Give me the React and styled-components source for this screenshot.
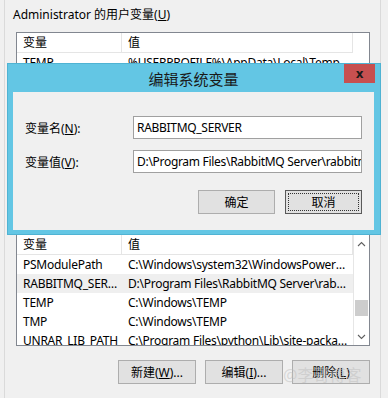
import React from 'react';
import styled, { createGlobalStyle } from 'styled-components';

const GlobalStyle = createGlobalStyle`
  html, body {
    margin: 0;
    padding: 0;
    background: #f0f0f0;
  }
  body {
    font-family: "Noto Sans", "Noto Sans CJK SC", sans-serif;
    font-size: 12px;
    color: #000;
  }
`;

const Window = styled.div`
  position: relative;
  width: 388px;
  height: 398px;
  overflow: hidden;
  background: #f0f0f0;
  box-sizing: border-box;
`;

const Frame = styled.div`
  margin: 0 7px 0 4px;
  height: 100%;
  border-left: 1px solid #dadada;
  border-right: 1px solid #dadada;
  box-sizing: border-box;
  padding: 6px 10px 0 8px;
  display: flex;
  flex-direction: column;
`;

const GroupLabel = styled.div`
  height: 18px;
  line-height: 18px;
  white-space: nowrap;
  margin-bottom: 8px;
`;

const Key = styled.span`
  text-decoration: underline;
`;

const List = styled.div`
  height: ${p => p.height}px;
  margin-left: 3px;
  border: 1px solid #828790;
  background: #fff;
  box-sizing: border-box;
  display: flex;
  overflow: hidden;
`;

const ListBody = styled.div`
  flex: 1;
  min-width: 0;
  display: flex;
  flex-direction: column;
`;

const Row = styled.div`
  display: grid;
  grid-template-columns: 105px minmax(0, 1fr);
  height: 19px;
  flex-shrink: 0;
  line-height: 19px;
  background: ${p => (p.selected ? '#efefef' : 'transparent')};
  white-space: nowrap;
`;

const HeadRow = styled(Row)`
  border-bottom: 1px solid #e5e5e5;
`;

const Cell = styled.div`
  min-width: 0;
  padding-left: 6px;
  padding-right: 4px;
  overflow: hidden;
  text-overflow: ellipsis;
  letter-spacing: -0.25px;
`;

const HeadCell = styled(Cell)`
  border-right: 1px solid #e5e5e5;
  letter-spacing: 0;
`;

const ScrollArea = styled.div`
  width: 15px;
  flex-shrink: 0;
  border-left: 1px solid ${p => (p.bar ? '#e6e6e6' : '#fff')};
  display: flex;
  flex-direction: column;
  background: #fff;
`;

const Arrow = styled.div`
  height: 17px;
  display: flex;
  align-items: center;
  justify-content: center;
`;

const Track = styled.div`
  flex: 1;
  display: flex;
  flex-direction: column;
  padding-top: 48px;
`;

const Thumb = styled.div`
  height: 16px;
  margin: 0 1px;
  background: #cdcdcd;
`;

const Spacer = styled.div`
  height: ${p => p.h}px;
  flex-shrink: 0;
`;

const ButtonBar = styled.div`
  display: flex;
  justify-content: flex-end;
  gap: 9px;
`;

const Button = styled.button`
  width: ${p => p.w || 78}px;
  height: 24px;
  padding: 0;
  font: inherit;
  color: #000;
  background: #e1e1e1;
  border: 1px solid ${p => (p.focus ? '#5a5a5a' : '#adadad')};
  box-sizing: border-box;
  position: relative;
  display: flex;
  align-items: center;
  justify-content: center;
  ${p => p.focus && `
    &::after {
      content: '';
      position: absolute;
      inset: 2px;
      border: 1px dotted #333;
    }
  `}
`;

const Dialog = styled.div`
  position: absolute;
  left: 7px;
  top: 63px;
  width: 374px;
  height: 172px;
  background: #63c6e4;
  border: 1px solid #4fb3d3;
  box-sizing: border-box;
  display: flex;
  flex-direction: column;
  padding: 0 6px 4px 5px;
`;

const TitleBar = styled.div`
  height: 28px;
  flex-shrink: 0;
  display: flex;
  align-items: center;
  justify-content: center;
  position: relative;
  font-size: 15px;
  color: #1a1a1a;
`;

const CloseButton = styled.div`
  position: absolute;
  right: -1px;
  top: 0;
  width: 31px;
  height: 19px;
  background: #c75050;
  display: flex;
  align-items: center;
  justify-content: center;
  font-family: "DejaVu Sans", sans-serif;
  font-weight: bold;
  font-size: 12px;
  color: #1a1a1a;
`;

const DialogBody = styled.div`
  flex: 1;
  background: #f0f0f0;
  display: flex;
  flex-direction: column;
  padding: 24px 12px 0 12px;
  gap: 11px;
`;

const FieldRow = styled.div`
  display: flex;
  align-items: center;
`;

const FieldLabel = styled.div`
  width: 108px;
  flex-shrink: 0;
  white-space: nowrap;
`;

const Input = styled.div`
  flex: 1;
  min-width: 0;
  height: 23px;
  line-height: 21px;
  border: 1px solid #a0a0a0;
  background: #fff;
  box-sizing: border-box;
  padding-left: 3px;
  white-space: nowrap;
  overflow: hidden;
  letter-spacing: -0.3px;
`;

const DialogButtons = styled(ButtonBar)`
  margin-top: 6px;
  gap: 10px;
`;

const Watermark = styled.div`
  position: absolute;
  left: 283px;
  top: 362px;
  font-size: 16px;
  color: rgba(190, 190, 190, 0.5);
  white-space: nowrap;
  pointer-events: none;
`;

const UpIcon = () => (
  <svg width="9" height="6" viewBox="0 0 9 6">
    <path d="M1 5 L4.5 1.5 L8 5" fill="none" stroke="#606060" strokeWidth="1.1" />
  </svg>
);

const DownIcon = () => (
  <svg width="9" height="6" viewBox="0 0 9 6">
    <path d="M1 1 L4.5 4.5 L8 1" fill="none" stroke="#606060" strokeWidth="1.1" />
  </svg>
);

const systemVars = [
  ['PSModulePath', 'C:\\Windows\\system32\\WindowsPowerShell\\v1.0\\Modules\\'],
  ['RABBITMQ_SERVER', 'D:\\Program Files\\RabbitMQ Server\\rabbitmq_server-3.6.5'],
  ['TEMP', 'C:\\Windows\\TEMP'],
  ['TMP', 'C:\\Windows\\TEMP'],
  ['UNRAR_LIB_PATH', 'C:\\Program Files\\python\\Lib\\site-packages\\unrar'],
];

const App = () => {
  return (
    <Window>
      <GlobalStyle />
      <Frame>
        <GroupLabel>
          Administrator 的用户变量(<Key>U</Key>)
        </GroupLabel>
        <List height={170}>
          <ListBody>
            <HeadRow>
              <HeadCell>变量</HeadCell>
              <HeadCell>值</HeadCell>
            </HeadRow>
            <Row>
              <Cell>TEMP</Cell>
              <Cell>%USERPROFILE%\AppData\Local\Temp</Cell>
            </Row>
            <Row>
              <Cell>TMP</Cell>
              <Cell>%USERPROFILE%\AppData\Local\Temp</Cell>
            </Row>
          </ListBody>
          <ScrollArea />
        </List>
        <Spacer h={32} />
        <List height={112}>
          <ListBody>
            <HeadRow>
              <HeadCell>变量</HeadCell>
              <HeadCell>值</HeadCell>
            </HeadRow>
            {systemVars.map(([name, value], i) => (
              <Row key={name} selected={i === 1}>
                <Cell>{name}</Cell>
                <Cell>{value}</Cell>
              </Row>
            ))}
          </ListBody>
          <ScrollArea bar>
            <Arrow><UpIcon /></Arrow>
            <Track>
              <Thumb />
            </Track>
            <Arrow><DownIcon /></Arrow>
          </ScrollArea>
        </List>
        <Spacer h={14} />
        <ButtonBar>
          <Button>新建(<Key>W</Key>)...</Button>
          <Button>编辑(<Key>I</Key>)...</Button>
          <Button>删除(<Key>L</Key>)</Button>
        </ButtonBar>
      </Frame>

      <Dialog>
        <TitleBar>
          编辑系统变量
          <CloseButton>x</CloseButton>
        </TitleBar>
        <DialogBody>
          <FieldRow>
            <FieldLabel>变量名(<Key>N</Key>):</FieldLabel>
            <Input>RABBITMQ_SERVER</Input>
          </FieldRow>
          <FieldRow>
            <FieldLabel>变量值(<Key>V</Key>):</FieldLabel>
            <Input>D:\Program Files\RabbitMQ Server\rabbitmq_server-3.6.5\sbin</Input>
          </FieldRow>
          <DialogButtons>
            <Button w={77}>确定</Button>
            <Button w={77} focus>取消</Button>
          </DialogButtons>
        </DialogBody>
      </Dialog>

      <Watermark>@李哥博客</Watermark>
    </Window>
  );
};

export default App;
